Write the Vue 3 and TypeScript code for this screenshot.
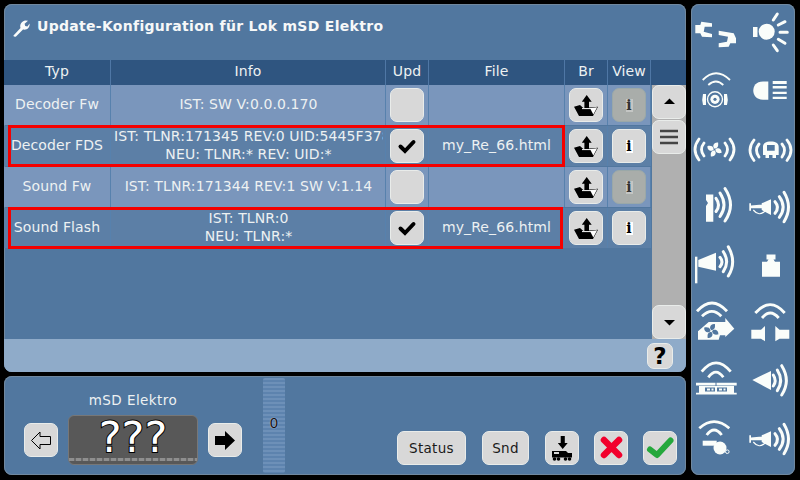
<script setup lang="ts">
interface UpdateRow {
  typ: string
  info: string[]
  checked: boolean
  file: string
  viewEnabled: boolean
  marked: boolean
}

const rows: UpdateRow[] = [
  { typ: 'Decoder Fw', info: ['IST: SW V:0.0.0.170'], checked: false, file: '', viewEnabled: false, marked: false },
  {
    typ: 'Decoder FDS',
    info: ['IST: TLNR:171345 REV:0 UID:5445F378', 'NEU: TLNR:* REV: UID:*'],
    checked: true,
    file: 'my_Re_66.html',
    viewEnabled: true,
    marked: true
  },
  { typ: 'Sound Fw', info: ['IST: TLNR:171344 REV:1 SW V:1.14'], checked: false, file: '', viewEnabled: false, marked: false },
  {
    typ: 'Sound Flash',
    info: ['IST: TLNR:0', 'NEU: TLNR:*'],
    checked: true,
    file: 'my_Re_66.html',
    viewEnabled: true,
    marked: true
  }
]

const headers = ['Typ', 'Info', 'Upd', 'File', 'Br', 'View', '']
const petalAngles = [0, 90, 180, 270]
</script>

<template>
  <div class="screen">
    <div class="left">
      <section class="panel main">
        <div class="title">
          <svg class="wrench" viewBox="0 0 18 18" width="18" height="18">
            <path d="M1.5 16.5 L8.5 9 C7.5 5.5 9.5 2 13.5 1.5 L16 1.7 L12.6 4.8 L13.2 7 L15.4 7.6 L17.6 4.6 C18 8.6 15 11.4 11 10.6 L4 17.4 C3 18 1 17.6 1.5 16.5 Z" fill="#fafcfa" />
          </svg>
          <span>Update-Konfiguration für Lok mSD Elektro</span>
        </div>

        <div class="table-wrap">
          <div class="head">
            <div v-for="h in headers" :key="h" class="head-cell">{{ h }}</div>
          </div>
          <div class="body">
            <div class="rows">
              <div v-for="row in rows" :key="row.typ" class="row" :class="{ marked: row.marked }">
                <div class="cell txt">{{ row.typ }}</div>
                <div class="cell info">
                  <div class="info-text">
                    <div v-for="line in row.info" :key="line">{{ line }}</div>
                  </div>
                </div>
                <div class="cell">
                  <button class="btn square">
                    <svg v-if="row.checked" viewBox="0 0 34 34" width="34" height="34">
                      <path d="M10.5 17.5 L15 22 L23.5 13" fill="none" stroke="#000" stroke-width="4" stroke-linecap="round" />
                    </svg>
                  </button>
                </div>
                <div class="cell txt">{{ row.file }}</div>
                <div class="cell">
                  <button class="btn square">
                    <svg viewBox="0 0 34 34" width="34" height="34">
                      <path d="M17.7 7 L22.7 13.7 L20 13.7 L20 22 L15.4 22 L15.4 13.7 L12.8 13.7 Z" fill="#000" />
                      <path d="M5 18.7 L11 17 L14.3 20 L29 18.7 L24 28 L10 28 Z" fill="#000" />
                      <path d="M13 20.6 H22" stroke="#fff" stroke-width="1" />
                      <path d="M21 20 L28.2 19.2 L24.3 26.6 Z" fill="#fff" />
                    </svg>
                  </button>
                </div>
                <div class="cell">
                  <button class="btn square" :class="{ off: !row.viewEnabled }">
                    <span class="i-mark">i</span>
                  </button>
                </div>
                <div v-if="row.marked" class="mark"></div>
              </div>
            </div>
            <div class="scroll">
              <button class="btn scroll-btn">
                <svg viewBox="0 0 34 34" width="34" height="34"><path d="M12 19 L17.5 13.5 L23 19 Z" fill="#000" /></svg>
              </button>
              <button class="btn scroll-btn thumb">
                <svg viewBox="0 0 34 34" width="34" height="34">
                  <path d="M8 11 H26 M8 17 H26 M8 23 H26" stroke="#444" stroke-width="2.4" />
                </svg>
              </button>
              <button class="btn scroll-btn down">
                <svg viewBox="0 0 34 34" width="34" height="34"><path d="M12 15 L17.5 20.5 L23 15 Z" fill="#000" /></svg>
              </button>
            </div>
          </div>
        </div>

        <div class="foot">
          <button class="btn help">?</button>
        </div>
      </section>

      <section class="panel bottom">
        <div class="loco">
          <div class="loco-name">mSD Elektro</div>
          <div class="loco-row">
            <button class="btn square">
              <svg viewBox="0 0 34 34" width="34" height="34">
                <path d="M7.5 17.5 L16 9 L16 13.5 L26.5 13.5 L26.5 21.5 L16 21.5 L16 26 Z" fill="none" stroke="#000" stroke-width="1" />
              </svg>
            </button>
            <div class="loco-img">
              <span class="qq">???</span>
              <div class="rail"></div>
            </div>
            <button class="btn square">
              <svg viewBox="0 0 34 34" width="34" height="34">
                <path d="M7 13 L17 13 L17 8 L27 17.5 L17 27 L17 22 L7 22 Z" fill="#000" />
              </svg>
            </button>
          </div>
        </div>
        <div class="slider"><span>0</span></div>
        <div class="actions">
          <button class="btn text status">Status</button>
          <button class="btn text snd">Snd</button>
          <button class="btn square">
            <svg viewBox="0 0 34 34" width="34" height="34">
              <path d="M15.7 5 H19.8 V12 H22.7 L17.7 18 L12.8 12 H15.7 Z" fill="#000" />
              <path d="M7 20 H21 L23 22 H27 V26.5 H7 Z M9 21 V23 H14 V21 Z" fill="#000" fill-rule="evenodd" />
              <g fill="#000"><circle cx="9.5" cy="28" r="1.8" /><circle cx="13.5" cy="28" r="1.8" /><circle cx="20.5" cy="28" r="1.8" /><circle cx="24.5" cy="28" r="1.8" /></g>
            </svg>
          </button>
          <button class="btn square">
            <svg viewBox="0 0 34 34" width="34" height="34">
              <path d="M10 9 L25 24 M25 9 L10 24" stroke="#f2002d" stroke-width="6.5" stroke-linecap="round" />
            </svg>
          </button>
          <button class="btn square">
            <svg viewBox="0 0 34 34" width="34" height="34">
              <path d="M7 18.5 L14 24 L27.5 9.5" fill="none" stroke="#25a83c" stroke-width="6" stroke-linecap="round" stroke-linejoin="round" />
            </svg>
          </button>
        </div>
      </section>
    </div>

    <aside class="panel side">
      <!-- Kupplung -->
      <svg class="fn" viewBox="0 0 52 58">
        <path d="M10.3 17.7 L21 19.3 V22.7 H13.7 L12.7 27.7 L21 30 V33.3 L11 32.7 L9.3 29.3 H4.3 V21 H9.3 Z" fill="#fafdfa" />
        <path d="M27.7 26.7 L42.7 29.3 L45 34.3 V39.3 H39.3 L37.7 42.7 L27.7 43.3 V39.3 L36 37.7 L37 32.7 L27.7 31 Z" fill="#fafdfa" />
      </svg>
      <!-- Licht -->
      <svg class="fn" viewBox="0 0 52 58">
        <circle cx="23.7" cy="27.7" r="8" fill="#fafdfa" />
        <rect x="10" y="23" width="4.5" height="10" fill="#fafdfa" />
        <path d="M30.3 16 L34.3 10 M35.3 21 L42 17.7 M37 28.3 H44.3 M35.3 35.3 L42 39.3 M30.3 41 L34.3 46.7" stroke="#fafdfa" stroke-width="3" stroke-linecap="round" />
      </svg>
      <!-- Sound Rad -->
      <svg class="fn" viewBox="0 0 52 58">
        <path d="M11.7 18 Q25 4.5 39 18 M17.3 23 Q25 16 32.3 23" fill="none" stroke="#fafdfa" stroke-width="1.8" />
        <circle cx="24" cy="37.3" r="7.5" fill="none" stroke="#fafdfa" stroke-width="1.4" />
        <circle cx="24" cy="37.3" r="4.6" fill="#fafdfa" />
        <circle cx="24" cy="37.3" r="1.6" fill="#51779f" />
        <path d="M12 32 H15 V43 H12 Q10.5 37.5 12 32 Z M33 32 H36 Q37.5 37.5 36 43 H33 Z" fill="#fafdfa" />
      </svg>
      <!-- Fernlicht -->
      <svg class="fn" viewBox="0 0 52 58">
        <path d="M25.3 19.5 V37.7 H20 C13 37.7 10.3 33 10.3 28.6 C10.3 24 13 19.5 20 19.5 Z" fill="#fafdfa" />
        <path d="M29.7 19 H43.7 V22 H29.7 Z M29.7 24 H43.7 V26.5 H29.7 Z M29.7 29.7 H43.7 V31.9 H29.7 Z M29.7 34.7 H43.7 V37 H29.7 Z" fill="#fafdfa" />
      </svg>
      <!-- Lüfter Sound -->
      <svg class="fn" viewBox="0 0 52 58">
        <path d="M8 19 Q0 29.5 8 40 M13 23 Q8 29.5 13 36 M34 23 Q39 29.5 34 36 M39 19 Q47 29.5 39 40" fill="none" stroke="#fafdfa" stroke-width="2.8" stroke-linecap="round" />
        <path v-for="a in petalAngles" :key="a" d="M0 -0.8 C-3.5 -1.5 -3.5 -7 1 -7.8 C2 -5.5 3.5 -3 0 -0.8 Z" fill="#fafdfa" :transform="`translate(23.5 29.5) rotate(${a + 20})`" />
      </svg>
      <!-- Zug Sound -->
      <svg class="fn" viewBox="0 0 52 58">
        <path d="M11 20 Q3 30 11 40.5 M16 24 Q11 30 16 37 M39 24 Q44 30 39 37 M44 20 Q52 30 44 40.5" fill="none" stroke="#fafdfa" stroke-width="2.8" stroke-linecap="round" />
        <path d="M20 35 V27 C20 23 23 21.5 27.8 21.5 C32.5 21.5 35.7 23 35.7 27 V35 H33 V38 H29.5 V35 H26 V38 H22.5 V35 Z M24 25 V30.7 H31.7 V25 Z" fill="#fafdfa" fill-rule="evenodd" />
      </svg>
      <!-- Signal -->
      <svg class="fn" viewBox="0 0 52 58">
        <path d="M15 16.5 H22.3 V43.7 H15 V28 L17 25 L15 22 Z" fill="#fafdfa" />
        <path d="M25 20.3 Q30 27 25 33.5 M29 15 Q37 27 29 38.5 M34 10.5 Q45 27 34 43" fill="none" stroke="#fafdfa" stroke-width="3" stroke-linecap="round" />
      </svg>
      <!-- Horn -->
      <svg class="fn" viewBox="0 0 52 58">
        <path d="M18.7 25.3 L28 21.3 V37 L18.7 32 Z M6.3 25.3 H8 V27.6 L19 26.5 V30 L8 30.3 V32.7 H6.3 Z" fill="#fafdfa" />
        <path d="M10.3 32 Q16 39 22 33" fill="none" stroke="#fafdfa" stroke-width="1.2" />
        <path d="M32 23.7 Q37 29.3 32 35.3 M36.3 18.7 Q44 29.3 36.3 39.3 M41 14.3 Q50 29.3 41 43.7" fill="none" stroke="#fafdfa" stroke-width="3" stroke-linecap="round" />
      </svg>
      <!-- Ansage -->
      <svg class="fn" viewBox="0 0 52 58">
        <rect x="4" y="20.7" width="2.4" height="26.6" fill="#fafdfa" />
        <path d="M7.3 24 L25 16.7 V34.7 L7.3 30.7 Z" fill="#fafdfa" />
        <path d="M29 21.3 Q33 26 29 30.7 M32.3 15.7 Q39 26 32.3 35.7 M37.3 10.7 Q46 26 37.3 40" fill="none" stroke="#fafdfa" stroke-width="3" stroke-linecap="round" />
      </svg>
      <!-- Gewicht -->
      <svg class="fn" viewBox="0 0 52 58">
        <path d="M19 25.7 H24 L25.5 23.5 H23.5 V18.5 H32.5 V23.5 H30.5 L32 25.7 H37 V40.7 H19 Z" fill="#fafdfa" />
      </svg>
      <!-- Rangiergang -->
      <svg class="fn" viewBox="0 0 52 58">
        <path d="M6 17.3 Q21 0.7 36 17.3 M11 22.3 Q21 12.3 30.3 22.3" fill="none" stroke="#fafdfa" stroke-width="2.8" />
        <path d="M7 45.7 V37.3 L17.7 28 H34.3 V24 L43.3 34.7 L34.3 43 V41.3 H29 L27.7 45.7 Z" fill="#fafdfa" />
        <path v-for="a in petalAngles" :key="a" d="M0 -0.8 C-3.5 -1.5 -3.5 -7 1 -7.8 C2 -5.5 3.5 -3 0 -0.8 Z" fill="#51779f" :transform="`translate(20.3 37) rotate(${a + 20})`" />
      </svg>
      <!-- Puffer -->
      <svg class="fn" viewBox="0 0 52 58">
        <path d="M12.3 19 Q27.3 2.4 41.7 19 M19 24 Q27.3 14 35.7 24" fill="none" stroke="#fafdfa" stroke-width="2.8" />
        <path d="M8.3 35.7 H18 L22 32 V47.3 L18 44.7 H8.3 Z M46.3 35.7 H36.5 L32.3 32 V47.3 L36.5 44.7 H46.3 Z" fill="#fafdfa" />
      </svg>
      <!-- Bahnsteig -->
      <svg class="fn" viewBox="0 0 52 58">
        <path d="M10.7 19.7 Q25 2 39.7 19.7 M17.3 25.3 Q25 15 32.3 25.3" fill="none" stroke="#fafdfa" stroke-width="2.8" />
        <path d="M5 30.7 H24.5 V33.5 H5 Z M25.5 30.7 H45.7 V33.5 H25.5 Z" fill="#fafdfa" />
        <path d="M8 34 H43 V40.7 H45.7 V42.5 H5 V40.7 H8 Z M14 35.5 V39.5 H24 V35.5 Z M26 35.5 V39.5 H36 V35.5 Z" fill="#fafdfa" fill-rule="evenodd" />
        <path d="M16 36.5 H19 V38.5 H16 Z M20.5 36.5 H22.5 V38.5 H20.5 Z M28 36.5 H31 V38.5 H28 Z M32.5 36.5 H34.5 V38.5 H32.5 Z" fill="#fafdfa" />
      </svg>
      <!-- Ansage 2 -->
      <svg class="fn" viewBox="0 0 52 58">
        <path d="M9.3 28 L28 19 V38 Z" fill="#fafdfa" />
        <path d="M30.3 23 Q34 28.7 30.3 34 M34.3 18 Q41 28.7 34.3 38.7 M38.7 13.7 Q48 28.7 38.7 43" fill="none" stroke="#fafdfa" stroke-width="3" stroke-linecap="round" />
      </svg>
      <!-- Pfeife -->
      <svg class="fn" viewBox="0 0 52 58">
        <path d="M8.3 18.3 Q23 5 38.3 18.3 M15.7 25 Q23 15 30.7 25" fill="none" stroke="#fafdfa" stroke-width="2.8" />
        <rect x="11.7" y="30.7" width="14" height="5" fill="#fafdfa" />
        <circle cx="29" cy="38" r="6.5" fill="#fafdfa" />
        <circle cx="36.3" cy="41.7" r="1.8" fill="none" stroke="#fafdfa" stroke-width="1" />
      </svg>
      <!-- Horn 2 -->
      <svg class="fn" viewBox="0 0 52 58">
        <path d="M18.7 25.3 L28 21.3 V37 L18.7 32 Z M6.3 25.3 H8 V27.6 L19 26.5 V30 L8 30.3 V32.7 H6.3 Z" fill="#fafdfa" />
        <path d="M10.3 32 Q16 39 22 33" fill="none" stroke="#fafdfa" stroke-width="1.2" />
        <path d="M32 23.7 Q37 29.3 32 35.3 M36.3 18.7 Q44 29.3 36.3 39.3 M41 14.3 Q50 29.3 41 43.7" fill="none" stroke="#fafdfa" stroke-width="3" stroke-linecap="round" />
      </svg>
    </aside>
  </div>
</template>

<style>
body {
  background: #000;
}
</style>

<style scoped>
.screen {
  width: 800px;
  height: 480px;
  box-sizing: border-box;
  padding: 4px 5px 5px 4px;
  display: flex;
  gap: 5px;
  background: #000;
  font-family: "DejaVu Sans", sans-serif;
  color: #edf1f2;
  overflow: hidden;
}

.left {
  width: 682px;
  display: flex;
  flex-direction: column;
  gap: 4px;
}

.panel {
  background: #51779f;
  border-radius: 8px;
  box-shadow: inset 0 0 0 1px #70889f;
  box-sizing: border-box;
  overflow: hidden;
}

.main {
  height: 368px;
  display: flex;
  flex-direction: column;
}

.title {
  height: 56px;
  padding: 14px 0 0 8px;
  box-sizing: border-box;
  display: flex;
  align-items: flex-start;
  gap: 7px;
  font-size: 14px;
  font-weight: bold;
  letter-spacing: 0.3px;
  color: #f6f8f8;
}

.wrench {
  margin-top: 1px;
}

.head {
  display: grid;
  grid-template-columns: 106px 274px 42px 135px 42px 42px 1fr;
  gap: 1px;
  height: 25px;
  background: #2f5580;
}

.head-cell {
  display: flex;
  align-items: center;
  justify-content: center;
  padding-bottom: 3px;
  box-sizing: border-box;
  font-size: 14px;
  letter-spacing: 0.1px;
  background: #2f5580;
  box-shadow: 1px 0 0 #4f77a5;
}

.body {
  display: flex;
  height: 254px;
}

.rows {
  width: 647px;
  display: flex;
  flex-direction: column;
  gap: 1px;
}

.row {
  position: relative;
  display: grid;
  grid-template-columns: 106px 274px 42px 135px 42px 42px;
  gap: 1px;
  height: 40px;
  background: #5781ad;
}

.cell {
  display: flex;
  align-items: center;
  justify-content: center;
  font-size: 14px;
  letter-spacing: 0.1px;
  background: #7a96bc;
  white-space: nowrap;
}

.txt {
  padding-bottom: 2px;
  box-sizing: border-box;
}

.row.marked .cell {
  background: #5c7fa6;
}

.info {
  line-height: 18px;
  text-align: center;
  padding: 0 2px 2px 3px;
  box-sizing: border-box;
}

.info-text {
  width: 100%;
  overflow: hidden;
}

.mark {
  position: absolute;
  left: 4px;
  top: -1px;
  right: 86px;
  bottom: -1px;
  border: 3px solid #f40000;
  pointer-events: none;
}

.row:nth-child(4) .mark {
  right: 88px;
}

.btn {
  padding: 0;
  margin: 0;
  border: 1px solid #e9ecea;
  border-radius: 7px;
  background: #d8d8d8;
  box-sizing: border-box;
  display: flex;
  align-items: center;
  justify-content: center;
  color: #1a1a1a;
  font-family: inherit;
}

.btn svg {
  flex: none;
}

.square {
  width: 34px;
  height: 34px;
}

.square.off {
  background: #a9adaa;
  border-color: #9aa8a8;
}

.i-mark {
  display: block;
  width: 7px;
  height: 13px;
  line-height: 13px;
  background: #fff;
  color: #000;
  font-family: "DejaVu Serif", serif;
  font-weight: bold;
  font-size: 14px;
  letter-spacing: 0;
  text-align: center;
}

.off .i-mark {
  background: #c4c6c4;
  color: #333;
}

.scroll {
  flex: 1;
  position: relative;
  background: #b0b0b0;
  display: flex;
  flex-direction: column;
  align-items: center;
  margin-left: 1px;
}

.scroll-btn {
  width: 34px;
  height: 34px;
  flex: none;
}

.thumb {
  margin-top: 1px;
}

.down {
  margin-top: auto;
}

.foot {
  flex: 1;
  background: #8fabc9;
  display: flex;
  justify-content: flex-end;
  align-items: center;
  padding-right: 13px;
}

.help {
  width: 26px;
  height: 26px;
  font-size: 23px;
  font-weight: bold;
  color: #000;
}

.bottom {
  height: 99px;
  display: flex;
  padding: 2px 9px 10px 20px;
}

.loco {
  width: 218px;
  display: flex;
  flex-direction: column;
  align-items: center;
}

.loco-name {
  margin-top: 13px;
  height: 25px;
  font-size: 13.5px;
  line-height: 18px;
  letter-spacing: 0.45px;
}

.loco-row {
  display: flex;
  align-items: center;
  gap: 10px;
}

.loco-img {
  position: relative;
  width: 130px;
  height: 50px;
  box-sizing: border-box;
  border: 1px solid #777;
  border-radius: 6px;
  background: #585858;
  text-align: center;
}

.qq {
  display: block;
  font-size: 43px;
  line-height: 40px;
  margin-top: 1px;
  color: #fff;
  -webkit-text-stroke: 2px #000;
  paint-order: stroke fill;
}

.rail {
  position: absolute;
  left: 0;
  right: 0;
  bottom: 3px;
  height: 3px;
  background: repeating-linear-gradient(90deg, #8e8e8e 0 5px, #6a6a6a 5px 7px);
}

.slider {
  width: 22px;
  height: 95px;
  margin-left: 21px;
  border-radius: 2px;
  background: repeating-linear-gradient(180deg, #6d90b8 0 2px, #5d83ae 2px 4px);
  display: flex;
  align-items: flex-start;
  justify-content: center;
  font-size: 14px;
  color: #111;
}

.slider span {
  margin-top: 37px;
  text-shadow: 0 0 1px #eef;
}

.actions {
  margin-left: auto;
  align-self: flex-end;
  display: flex;
  gap: 15px;
}

.text {
  height: 34px;
  font-size: 13.5px;
  letter-spacing: 0.3px;
}

.status {
  width: 69px;
  margin-right: 1px;
}

.snd {
  width: 47px;
  margin-right: 1px;
}

.side {
  flex: 1;
  height: 471px;
  display: grid;
  grid-template-columns: 52px 52px;
  grid-auto-rows: 58px;
  align-content: start;
}

.fn {
  width: 52px;
  height: 58px;
  display: block;
}
</style>
